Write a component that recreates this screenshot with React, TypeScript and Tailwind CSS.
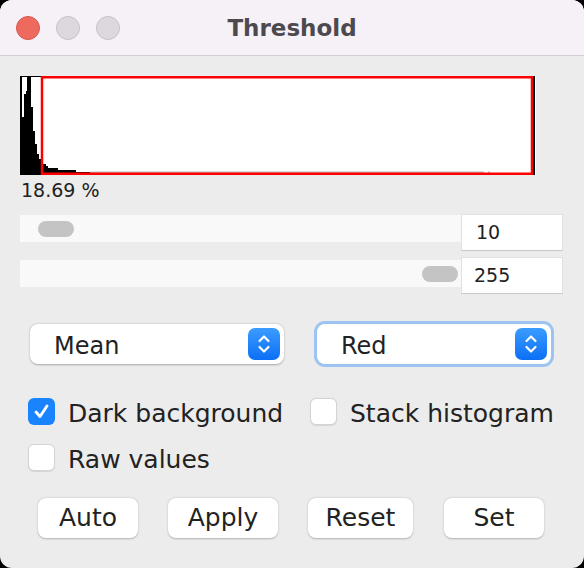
import React from 'react';

// histogram bins: [x, width, top] in the 516x99 box
const bins: [number, number, number][] = [
  [0, 2, 0],
  [2, 2, 41],
  [4, 2, 18],
  [6, 1, 15],
  [7, 4, 0],
  [11, 2, 31],
  [13, 2, 55],
  [15, 2, 68],
  [17, 2, 78],
  [19, 3, 83],
  [22, 4, 88],
  [26, 2, 90],
  [28, 10, 92],
  [38, 18, 94],
  [56, 14, 96],
];

function Histogram() {
  return (
    <svg width="516" height="99" viewBox="0 0 516 99" className="block">
      <rect x="0" y="0" width="516" height="99" fill="#fff" />
      <rect x="0" y="0" width="22" height="1" fill="#000" />
      {bins.map(([x, w, top], i) => (
        <rect key={i} x={x} y={top} width={w} height={99 - top} fill="#000" />
      ))}
      <rect x="70" y="95.5" width="394" height="1.5" fill="#bdbdbd" />
      <rect x="468" y="95.5" width="2" height="1.5" fill="#bdbdbd" />
      <rect x="513" y="0" width="2" height="99" fill="#000" />
      <rect x="22" y="1.25" width="490" height="96.5" fill="none" stroke="#ff0000" strokeWidth="2.5" />
    </svg>
  );
}

function Stepper() {
  return (
    <div className="w-[32px] h-[32px] rounded-[7px] bg-[linear-gradient(#3b9cff,#0b6ff5)] flex items-center justify-center">
      <svg width="14" height="22" viewBox="0 0 14 22" fill="none" stroke="#fff" strokeWidth="2.2" strokeLinecap="round" strokeLinejoin="round">
        <path d="M2.5 8 L7 3.5 L11.5 8" />
        <path d="M2.5 14 L7 18.5 L11.5 14" />
      </svg>
    </div>
  );
}

function Checkbox({ checked, label }: { checked?: boolean; label: string }) {
  return (
    <div className="flex items-center">
      {checked ? (
        <div className="w-[27px] h-[27px] rounded-[6px] bg-[#1a84ff] flex items-center justify-center">
          <svg width="17" height="17" viewBox="0 0 17 17" fill="none" stroke="#fff" strokeWidth="2.8" strokeLinecap="round" strokeLinejoin="round">
            <path d="M3 9 L7 13.5 L14 3" />
          </svg>
        </div>
      ) : (
        <div className="w-[27px] h-[27px] rounded-[6px] bg-white border border-[#d4d4d4] shadow-[0_0.5px_1px_rgba(0,0,0,0.1)]" />
      )}
      <span className="ml-[13px] text-[25px] leading-[27px] translate-y-[2px] text-[#222]">{label}</span>
    </div>
  );
}

function Button({ label, w }: { label: string; w: string }) {
  return (
    <div
      className={`${w} h-[40px] rounded-[8px] bg-white shadow-[0_0.5px_2px_rgba(0,0,0,0.25)] flex items-center justify-center text-[25px] text-[#222]`}
    >
      {label}
    </div>
  );
}

export default function App() {
  return (
    <div className="w-[584px] h-[568px] bg-black">
      <div
        className="w-[584px] h-[568px] rounded-[12px] overflow-hidden bg-[#ececec] flex flex-col"
        style={{ fontFamily: '"DejaVu Sans", sans-serif' }}
      >
        {/* Title bar */}
        <div className="h-[56px] bg-[#f6f1f6] border-b border-[#d3ced3] flex items-center relative">
          <div className="flex items-center gap-[16px] pl-[16px] pt-[1px]">
            <div className="w-[24px] h-[24px] rounded-full bg-[#ee6a5f] border border-[#d8584e]" />
            <div className="w-[24px] h-[24px] rounded-full bg-[#ddd8dd] border border-[#c6c1c6]" />
            <div className="w-[24px] h-[24px] rounded-full bg-[#ddd8dd] border border-[#c6c1c6]" />
          </div>
          <div className="absolute inset-0 flex items-center justify-center text-[23px] font-bold text-[#4c494f] pt-[2px]">
            Threshold
          </div>
        </div>

        {/* Histogram */}
        <div className="pl-[20px] pt-[20px]">
          <Histogram />
        </div>
        <div className="pl-[21px] mt-[4px] text-[19px] leading-[22px] text-[#222]">18.69 %</div>

        {/* Sliders */}
        <div className="pl-[20px] mt-[13px] flex items-start">
          <div className="w-[441px] h-[27px] mt-[1px] bg-[#f9f9f9] flex items-center">
            <div className="ml-[18px] w-[36px] h-[16px] rounded-full bg-[#c4c4c4]" />
          </div>
          <div className="w-[102px] h-[37px] bg-white border border-[#e0e0e0] border-b-[#c8c8c8] flex items-center pl-[14px] text-[19px] text-[#222]">
            10
          </div>
        </div>
        <div className="pl-[20px] mt-[6px] flex items-start">
          <div className="w-[441px] h-[27px] mt-[3px] bg-[#f9f9f9] flex items-center justify-end">
            <div className="mr-[3px] w-[36px] h-[16px] rounded-full bg-[#c4c4c4]" />
          </div>
          <div className="w-[102px] h-[37px] bg-white border border-[#e0e0e0] border-b-[#c8c8c8] flex items-center pl-[12px] text-[19px] text-[#222]">
            255
          </div>
        </div>

        {/* Dropdowns */}
        <div className="mt-[30px] flex items-center">
          <div className="ml-[30px] w-[254px] h-[40px] rounded-[8px] bg-white shadow-[0_0.5px_2px_rgba(0,0,0,0.3)] flex items-center justify-between pl-[24px] pr-[4px]">
            <span className="text-[24px] text-[#222] translate-y-[2px]">Mean</span>
            <Stepper />
          </div>
          <div className="ml-[33px] w-[234px] h-[40px] rounded-[8px] bg-white shadow-[0_0_0_3px_#9cc4f3] flex items-center justify-between pl-[24px] pr-[4px]">
            <span className="text-[24px] text-[#222] translate-y-[2px]">Red</span>
            <Stepper />
          </div>
        </div>

        {/* Checkboxes */}
        <div className="mt-[34px] pl-[28px] flex items-center">
          <div className="w-[282px]">
            <Checkbox checked label="Dark background" />
          </div>
          <Checkbox label="Stack histogram" />
        </div>
        <div className="mt-[19px] pl-[28px]">
          <Checkbox label="Raw values" />
        </div>

        {/* Buttons */}
        <div className="mt-[27px] pl-[38px] flex items-center">
          <Button label="Auto" w="w-[100px]" />
          <div className="w-[30px]" />
          <Button label="Apply" w="w-[110px]" />
          <div className="w-[30px]" />
          <Button label="Reset" w="w-[105px]" />
          <div className="w-[31px]" />
          <Button label="Set" w="w-[100px]" />
        </div>
      </div>
    </div>
  );
}
